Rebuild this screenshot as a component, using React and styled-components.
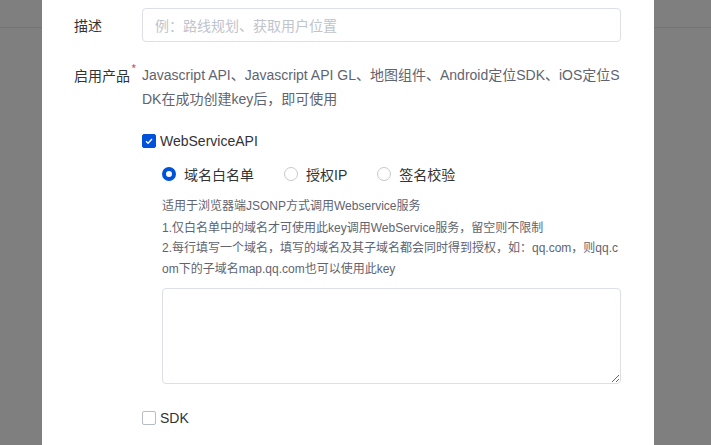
import React from "react";
import styled, { createGlobalStyle } from "styled-components";

const Global = createGlobalStyle`
  html, body { margin: 0; padding: 0; height: 100%; }
  body {
    background: #7f7f7f;
    font-family: "Liberation Sans", "Noto Sans CJK SC", sans-serif;
    overflow: hidden;
  }
  #root { height: 100%; }
`;

const Page = styled.div`
  position: relative;
  width: 711px;
  height: 445px;
  background: #7f7f7f;
  overflow: hidden;
`;

const PageHeader = styled.div`
  height: 27px;
  border-bottom: 1px solid #747474;
`;

const Modal = styled.div`
  position: absolute;
  left: 42px;
  top: 0;
  width: 612px;
  bottom: 0;
  background: #fff;
  box-sizing: border-box;
  padding: 8px 33px 0 32px;
  display: flex;
  flex-direction: column;
`;

const Row = styled.div`
  display: flex;
  align-items: flex-start;
  margin-bottom: ${(p) => p.$mb || 0}px;
`;

const Label = styled.div`
  width: 68px;
  flex: none;
  font-size: 14px;
  color: #333;
  line-height: ${(p) => p.$lh || 24}px;
  font-family: "Noto Sans CJK SC", sans-serif;
  position: relative;
`;

const Star = styled.span`
  color: #e34d59;
  font-size: 12px;
  position: absolute;
  top: -6px;
  margin-left: 1px;
`;

const Field = styled.div`
  flex: 1;
  min-width: 0;
`;

const Input = styled.input`
  width: 100%;
  height: 34px;
  box-sizing: border-box;
  border: 1px solid #dcdfe6;
  border-radius: 4px;
  padding: 0 12px;
  font-size: 14px;
  font-family: "Noto Sans CJK SC", sans-serif;
  outline: none;
  &::placeholder { color: #c0c4cc; }
`;

const ProductText = styled.div`
  font-size: 14px;
  line-height: 24px;
  color: #5f6470;
  word-break: break-all;
  font-family: "Liberation Sans", "Noto Sans CJK SC", sans-serif;
`;

const CheckRow = styled.label`
  display: flex;
  align-items: center;
  gap: 4px;
  height: 22px;
  font-size: 14px;
  color: #333;
  margin-top: ${(p) => p.$mt || 0}px;
`;

const Box = styled.span`
  width: 14px;
  height: 14px;
  box-sizing: border-box;
  border-radius: 2px;
  border: 1px solid ${(p) => (p.$on ? "#0052d9" : "#b8bcc4")};
  background: ${(p) => (p.$on ? "#0052d9" : "#fff")};
  display: flex;
  align-items: center;
  justify-content: center;
`;

const Sub = styled.div`
  padding-left: 20px;
`;

const RadioGroup = styled.div`
  display: flex;
  align-items: center;
  height: 24px;
  margin-top: 10px;
`;

const RadioItem = styled.label`
  display: flex;
  align-items: center;
  gap: 8px;
  margin-right: 30px;
  font-size: 14px;
  color: #333;
  font-family: "Liberation Sans", "Noto Sans CJK SC", sans-serif;
`;

const Circle = styled.span`
  width: 14px;
  height: 14px;
  box-sizing: border-box;
  border-radius: 50%;
  border: ${(p) => (p.$on ? "4px solid #0052d9" : "1px solid #c5c8ce")};
  background: #fff;
`;

const Desc = styled.div`
  margin-top: 10px;
  font-size: 12px;
  line-height: 20.5px;
  color: #5f6470;
  word-break: break-all;
  font-family: "Liberation Sans", "Noto Sans CJK SC", sans-serif;
`;

const DescLine = styled.div`
  margin-bottom: ${(p) => p.$mb || 0}px;
`;

const TextArea = styled.textarea`
  display: block;
  width: 100%;
  height: 96px;
  box-sizing: border-box;
  margin-top: 9px;
  border: 1px solid #dcdfe6;
  border-radius: 4px;
  resize: vertical;
  outline: none;
  font-family: inherit;
`;

function Check({ on }) {
  return (
    <Box $on={on}>
      {on && (
        <svg width="10" height="10" viewBox="0 0 10 10">
          <path d="M2 5.2 L4.1 7.2 L8 3" fill="none" stroke="#fff" strokeWidth="1.4" />
        </svg>
      )}
    </Box>
  );
}

export default function App() {
  return (
    <>
      <Global />
      <Page>
        <PageHeader />
        <Modal>
          <Row $mb={21}>
            <Label $lh={34}>描述</Label>
            <Field>
              <Input placeholder="例：路线规划、获取用户位置" />
            </Field>
          </Row>
          <Row>
            <Label>
              启用产品<Star>*</Star>
            </Label>
            <Field>
              <ProductText>
                Javascript API、Javascript API GL、地图组件、Android定位SDK、iOS定位SDK在成功创建key后，即可使用
              </ProductText>
              <CheckRow $mt={19}>
                <Check on />
                WebServiceAPI
              </CheckRow>
              <Sub>
                <RadioGroup>
                  <RadioItem>
                    <Circle $on />
                    域名白名单
                  </RadioItem>
                  <RadioItem>
                    <Circle />
                    授权IP
                  </RadioItem>
                  <RadioItem>
                    <Circle />
                    签名校验
                  </RadioItem>
                </RadioGroup>
                <Desc>
                  <DescLine $mb={1}>适用于浏览器端JSONP方式调用Webservice服务</DescLine>
                  <DescLine>1.仅白名单中的域名才可使用此key调用WebService服务，留空则不限制</DescLine>
                  <DescLine>
                    2.每行填写一个域名，填写的域名及其子域名都会同时得到授权，如：qq.com，则qq.com下的子域名map.qq.com也可以使用此key
                  </DescLine>
                </Desc>
                <TextArea />
              </Sub>
              <CheckRow $mt={23}>
                <Check />
                SDK
              </CheckRow>
            </Field>
          </Row>
        </Modal>
      </Page>
    </>
  );
}
